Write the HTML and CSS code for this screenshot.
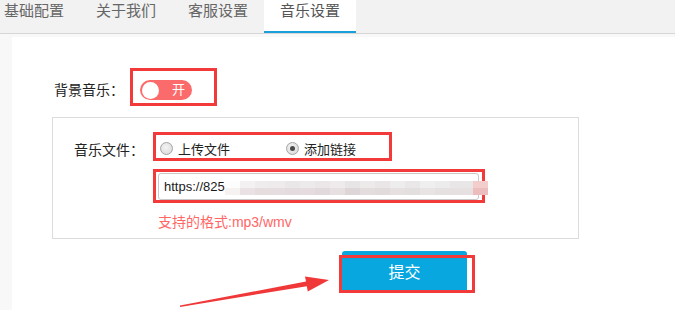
FILE: index.html
```html
<!DOCTYPE html>
<html lang="zh-CN">
<head>
    <meta charset="UTF-8">
    <title>音乐设置</title>
    <link rel="stylesheet" href="styles.css">
</head>
<body>
    <div class="tabs">
        <a class="tab">基础配置</a>
        <a class="tab">关于我们</a>
        <a class="tab">客服设置</a>
        <a class="tab active">音乐设置</a>
    </div>
    <div class="page">
        <div class="panel">
            <div class="bgm-row">
                <span class="bgm-label">背景音乐：</span>
                <div class="mark toggle-mark">
                    <span class="switch"><i class="knob"></i><em>开</em></span>
                </div>
            </div>
            <div class="music-box">
                <div class="field">
                    <span class="field-label">音乐文件：</span>
                    <div class="field-body">
                        <div class="mark radio-mark">
                            <label class="radio"><i class="dot"></i>上传文件</label>
                            <label class="radio second"><i class="dot checked"></i>添加链接</label>
                        </div>
                        <div class="mark input-mark">
                            <div class="url-input">https://825<span class="mosaic"></span></div>
                        </div>
                        <p class="tip">支持的格式:mp3/wmv</p>
                    </div>
                </div>
            </div>
            <div class="actions">
                <button class="submit">提交<span class="submit-mark"></span></button>
            </div>
        </div>
    </div>
    <svg class="arrow" width="675" height="310" viewBox="0 0 675 310">
        <polygon fill="#f03838" points="180,307 306.8,286.2 307.8,291.5 329,280 305,276.4 306,281.6 180,305.6"/>
    </svg>
</body>
</html>
```
FILE: styles.css
```css
body {
    margin: 0;
    background: #fff;
    font-family: "Liberation Sans", "Noto Sans CJK SC", sans-serif;
    color: #333;
    position: relative;
    height: 310px;
    overflow: hidden;
}
.tabs {
    display: flex;
    height: 33px;
    background: #f2f2f2;
    border-bottom: 1px solid #d6d6d6;
    margin-left: -12px;
}
.tab {
    box-sizing: border-box;
    height: 33px;
    padding: 0 16px;
    line-height: 22px;
    font-size: 15px;
    color: #666;
    border-bottom: 2px solid transparent;
}
.tab.active {
    background: #fff;
    border-bottom-color: #1a9fdb;
    color: #555;
}
.page {
    background: #f8f8f8;
    padding: 3px 0 0 12px;
}
.panel {
    background: #fff;
    height: 273px;
    padding: 31px 0 0 40px;
    box-sizing: border-box;
}
.mark {
    border: 3px solid #f23a3a;
    box-sizing: border-box;
}
.bgm-row {
    display: flex;
    align-items: center;
    padding-left: 2px;
}
.bgm-label {
    width: 76px;
    font-size: 14px;
    line-height: 20px;
    padding-top: 6px;
    color: #222;
}
.toggle-mark {
    padding: 9px 22px 3px 7px;
}
.switch {
    display: flex;
    align-items: center;
    width: 52px;
    height: 20px;
    border-radius: 10px;
    background: #fc6b6b;
    position: relative;
}
.knob {
    width: 17px;
    height: 17px;
    margin-left: 2px;
    border-radius: 50%;
    background: #fff;
}
.switch em {
    font-style: normal;
    color: #fff;
    font-size: 13px;
    margin-left: 13px;
    line-height: 20px;
}
.music-box {
    margin-top: 11px;
    width: 527px;
    height: 122px;
    border: 1px solid #dcdcdc;
    box-sizing: border-box;
    padding: 14px 0 0 21px;
}
.field {
    display: flex;
}
.field-label {
    width: 79px;
    margin-top: 8px;
    font-size: 14px;
    line-height: 20px;
    color: #222;
}
.radio-mark {
    display: flex;
    align-items: center;
    width: 239px;
    height: 29px;
    padding: 3px 0 0 4px;
    font-size: 13px;
    color: #222;
}
.radio {
    display: flex;
    align-items: center;
}
.radio.second {
    margin-left: 56px;
}
.dot {
    width: 11px;
    height: 11px;
    margin-right: 5px;
    border: 1px solid #a4a4a4;
    border-radius: 50%;
    background: radial-gradient(circle at 45% 40%, #f4f4f4, #d6d6d6);
    display: flex;
    align-items: center;
    justify-content: center;
}
.dot.checked::after {
    content: "";
    width: 5px;
    height: 5px;
    border-radius: 50%;
    background: #4a4a4a;
}
.input-mark {
    margin-top: 8px;
    width: 332px;
    height: 34px;
    padding: 1px 3px 0 2px;
}
.url-input {
    position: relative;
    box-sizing: border-box;
    height: 27px;
    border: 1px solid #c8c8c8;
    border-radius: 3px;
    padding-left: 5px;
    font-size: 13px;
    line-height: 25px;
    color: #1a1a1a;
}
.mosaic {
    position: absolute;
    left: 66px;
    top: 7px;
    width: 263px;
    height: 14px;
    background:
        linear-gradient(to right, #fdfdfd 0 15px, #f3f1f1 15px 30px, #eeecec 30px 45px, #efebec 45px 60px,
            #eae7e8 60px 75px, #edeaeb 75px 90px, #ebe7e9 90px 105px, #efebec 105px 120px, #e8e5e6 120px 135px,
            #edeaea 135px 150px, #eae6e7 150px 165px, #eeeded 165px 180px, #e9e7e7 180px 195px, #f0efef 195px 210px,
            #ececec 210px 225px, #e8e6e6 225px 248px, #f3cccc 248px) top / 100% 50% no-repeat,
        linear-gradient(to right, #f6f2f2 0 15px, #e9e1e3 15px 30px, #e6dddf 30px 45px, #e6dde0 45px 60px,
            #e3dbdd 60px 75px, #e6dcdf 75px 90px, #e1d9db 90px 105px, #e7e0e1 105px 120px, #ded5d8 120px 135px,
            #e3dddd 135px 150px, #e1dbdb 150px 165px, #e7e0e0 165px 180px, #e3dfdf 180px 195px, #e8e4e4 195px 210px,
            #e5e1e1 210px 225px, #e6e0e0 225px 248px, #ecbdbd 248px) bottom / 100% 50% no-repeat;
}
.tip {
    margin: 9px 0 0 5px;
    font-size: 14px;
    line-height: 20px;
    color: #f66;
}
.actions {
    margin-top: 12px;
    padding-left: 290px;
}
.submit {
    position: relative;
    display: block;
    width: 125px;
    height: 40px;
    border: none;
    border-radius: 3px 3px 0 0;
    background: #09a7df;
    color: #fff;
    font-family: "Liberation Sans", "Noto Sans CJK SC", sans-serif;
    font-size: 16px;
    padding: 0;
}
.submit-mark {
    position: absolute;
    left: -3px;
    top: 4px;
    width: 136px;
    height: 38px;
    border: 3px solid #f23a3a;
    box-sizing: border-box;
}
.arrow {
    position: absolute;
    left: 0;
    top: 0;
    pointer-events: none;
}
```
